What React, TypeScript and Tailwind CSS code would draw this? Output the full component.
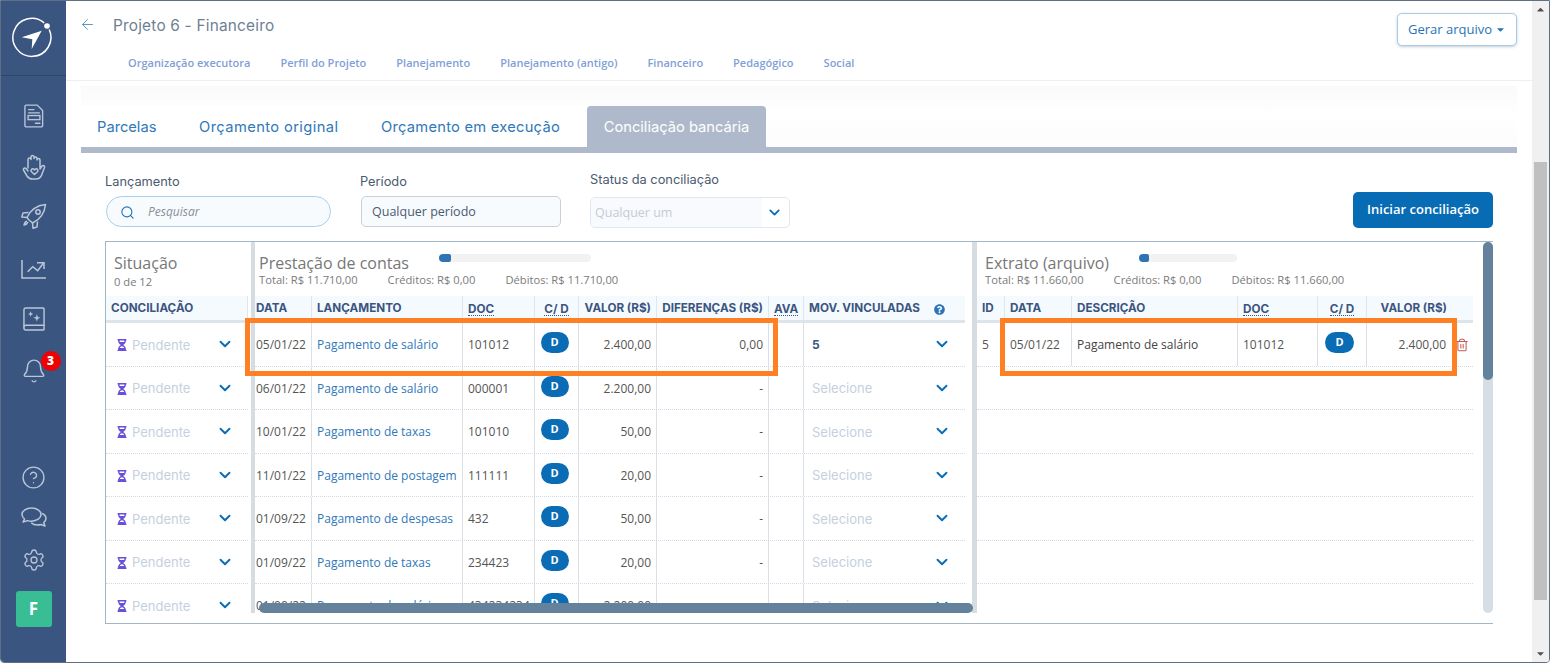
import React from 'react';
import { ArrowLeft, Search, ChevronDown, Bell, CircleHelp, Settings, Trash2 } from 'lucide-react';
import { FaHourglassHalf, FaQuestionCircle, FaCaretDown, FaCaretUp } from 'react-icons/fa';

const OPEN = "font-['Open_Sans',sans-serif]";
const HEAD = "font-['Inter',sans-serif]";

interface Row {
  date: string;
  name: string;
  doc: string;
  value: string;
  diff: string;
  linked: string;
}

const rows: Row[] = [
  { date: '05/01/22', name: 'Pagamento de salário', doc: '101012', value: '2.400,00', diff: '0,00', linked: '5' },
  { date: '06/01/22', name: 'Pagamento de salário', doc: '000001', value: '2.200,00', diff: '-', linked: '' },
  { date: '10/01/22', name: 'Pagamento de taxas', doc: '101010', value: '50,00', diff: '-', linked: '' },
  { date: '11/01/22', name: 'Pagamento de postagem', doc: '111111', value: '20,00', diff: '-', linked: '' },
  { date: '01/09/22', name: 'Pagamento de despesas', doc: '432', value: '50,00', diff: '-', linked: '' },
  { date: '01/09/22', name: 'Pagamento de taxas', doc: '234423', value: '20,00', diff: '-', linked: '' },
  { date: '01/09/22', name: 'Pagamento de salário', doc: '434234234', value: '2.200,00', diff: '-', linked: '' },
];

const navItems = ['Organização executora', 'Perfil do Projeto', 'Planejamento', 'Planejamento (antigo)', 'Financeiro', 'Pedagógico', 'Social'];

const Logo = () => (
  <svg width="42" height="42" viewBox="0 0 42 42" fill="none">
    <path d="M37.2 12.5A19 19 0 1 1 32.2 5.900" stroke="#fff" strokeWidth="1.500" />
    <circle cx="35" cy="9" r="2.800" fill="#fff" />
    <path d="M9.700 20.300 29.700 13.700 19.700 32 20.300 22.300Z" fill="#fff" />
  </svg>
);

const DocIcon = () => (
  <svg width="20" height="24" viewBox="0 0 22 26" fill="none" stroke="#b9c6d8" strokeWidth="1.500">
    <path d="M2.500 1h12l6 6v16.500a1.500 1.500 0 0 1-1.500 1.500H2.500A1.500 1.500 0 0 1 1 23.500V2.500A1.500 1.500 0 0 1 2.500 1Z" />
    <path d="M4.500 6h7M4.500 9.500h13" />
    <rect x="4.500" y="12.500" width="13" height="4.500" />
    <path d="M12 21h6" />
  </svg>
);

const HandIcon = () => (
  <svg width="24" height="26" viewBox="0 0 24 26" fill="none" stroke="#b9c6d8" strokeWidth="1.500" strokeLinecap="round" strokeLinejoin="round">
    <path d="M6 14V5.500a1.500 1.500 0 0 1 3 0V3a1.500 1.500 0 0 1 3 0v1.500a1.500 1.500 0 0 1 3 0V6a1.500 1.500 0 0 1 3 0v9l2-3a1.500 1.500 0 0 1 2.500 1.500L20 20a6.500 6.500 0 0 1-5.500 5h-4A6.500 6.500 0 0 1 5 22l-3.500-6a1.500 1.500 0 0 1 2.500-1.500L6 17" />
    <path d="M12.500 20.500l-3-2.800a1.700 1.700 0 0 1 2.400-2.400l.6.6.6-.6a1.700 1.700 0 0 1 2.400 2.400Z" />
  </svg>
);

const RocketIcon = () => (
  <svg width="26" height="26" viewBox="0 0 26 26" fill="none" stroke="#b9c6d8" strokeWidth="1.500" strokeLinejoin="round">
    <path d="M8 17 6 14.500C9 8 15 2.500 24.500 1.500 23.500 11 18 17 11.500 20Z" />
    <circle cx="17" cy="9" r="2.200" />
    <path d="M7.500 9.500 2 10 .8 14l5.200.5M16.500 18.500 16 24l-4 1.200-.5-5.200M6 18c-1.500.5-2.500 1.500-3 4 2.500-.5 3.500-1.500 4-3" />
  </svg>
);

const ChartIcon = () => (
  <svg width="25" height="19" viewBox="0 0 25 19" fill="none" stroke="#b9c6d8" strokeWidth="1.500">
    <path d="M1 0v18h24" />
    <path d="M6.700 11.700l5-5 5 4 6-8" />
    <path d="M16 2.700h7v6.300" />
  </svg>
);

const BookIcon = () => (
  <svg width="22" height="24" viewBox="0 0 23 25" fill="none" stroke="#b9c6d8" strokeWidth="1.500">
    <path d="M22 1H3a2 2 0 0 0-2 2v19a2 2 0 0 0 2 2h19" />
    <path d="M22 1v18H3a2 2 0 0 0-2 2" />
    <path d="M22 24v-5" />
    <path d="M8 4.500l.8 2 2 .8-2 .8-.8 2-.8-2-2-.8 2-.8ZM14.500 7.500l1 2.800 2.800 1-2.800 1-1 2.800-1-2.800-2.800-1 2.800-1Z" fill="#b9c6d8" stroke="none" />
  </svg>
);

const ChatIcon = () => (
  <svg width="26" height="22" viewBox="0 0 26 22" fill="none" stroke="#b9c6d8" strokeWidth="1.500" strokeLinejoin="round">
    <path d="M10.500 1C5.300 1 1 3.900 1 7.500c0 1.800 1 3.300 2.600 4.500L2 15l4.500-1.400c1.200.4 2.600.6 4 .6 5.200 0 9.500-3 9.500-6.700S15.700 1 10.500 1Z" />
    <path d="M21 6.500c2.400 1 4 2.800 4 5 0 1.600-.9 3-2.300 4.100L24 19l-4.300-1.500c-1 .3-2.100.5-3.200.5-2.600 0-4.900-.9-6.300-2.300" />
  </svg>
);

const Sidebar = () => (
  <aside className="flex h-full w-[65px] shrink-0 flex-col items-center bg-[#3a5580]">
    <div className="flex h-[75px] w-full shrink-0 items-center justify-center border-b border-[#2f4669] pr-[2px]">
      <Logo />
    </div>
    <div className="flex w-full flex-col items-center pt-[27px]">
      <div className="flex h-[26px] items-center"><DocIcon /></div>
      <div className="mt-[25px] flex h-[26px] items-center"><HandIcon /></div>
      <div className="mt-[23px] flex h-[26px] items-center"><RocketIcon /></div>
      <div className="mt-[27px] flex h-[26px] items-center"><ChartIcon /></div>
      <div className="mt-[24px] flex h-[26px] items-center"><BookIcon /></div>
      <div className="relative mt-[26px] flex h-[26px] items-center">
        <Bell size={26} strokeWidth={1.300} className="text-[#b9c6d8]" />
        <span className={`absolute -top-[7px] left-[20px] flex h-[20px] w-[20px] items-center justify-center rounded-full bg-[#f00000] text-[12px] font-extrabold text-white ${OPEN}`}>3</span>
      </div>
    </div>
    <div className="mt-[81px] flex w-full flex-col items-center">
      <CircleHelp size={25} strokeWidth={1.300} className="text-[#b9c6d8]" />
      <div className="mt-[17px]"><ChatIcon /></div>
      <Settings size={24} strokeWidth={1.300} className="mt-[19px] text-[#b9c6d8]" />
      <div className={`mt-[19px] flex h-[36px] w-[36px] items-center justify-center rounded-[3px] bg-[#38bd94] text-[17px] font-bold text-white ${OPEN}`}>F</div>
    </div>
  </aside>
);

const HeaderBar = () => (
  <header className="h-[80px] shrink-0 border-b border-[#eceff2] bg-white">
    <div className="flex items-start">
      <ArrowLeft size={17} strokeWidth={1.200} className="ml-[13px] mt-[15px] text-[#3f86c6]" />
      <h1 className={`ml-[17px] mt-[15px] text-[15.400px] font-normal leading-[20px] tracking-[0.2px] text-[#6f7f93] ${HEAD}`}>Projeto 6 - Financeiro</h1>
      <button className={`ml-auto mr-[15px] mt-[12px] flex h-[33px] w-[120px] items-center justify-center gap-[3px] rounded-[5px] border border-[#a9cbe3] bg-white text-[13px] font-medium text-[#1f74b9] shadow-[0_1px_3px_rgba(60,90,130,0.3)] ${OPEN}`}>
        Gerar arquivo <FaCaretDown size={11} />
      </button>
    </div>
    <nav className={`ml-[62px] mt-[9px] flex gap-[30px] text-[11px] font-semibold leading-[15px] text-[#7f9fd6] ${OPEN}`}>
      {navItems.map((item) => <span key={item}>{item}</span>)}
    </nav>
  </header>
);

const Tabs = () => (
  <div className={`mt-[5px] flex h-[61px] items-end bg-gradient-to-b from-[#fafafa] via-white to-[#fcfcfc] text-[14.700px] font-normal ${HEAD}`}>
    <span className="flex h-[41px] w-[103px] items-center bg-white pl-[16px] pt-[2px] text-[#2f78b9]">Parcelas</span>
    <span className="flex h-[41px] w-[181px] items-center bg-white pl-[15px] pt-[2px] tracking-[0.4px] text-[#2f78b9]">Orçamento original</span>
    <span className="flex h-[41px] w-[222px] items-center bg-white pl-[16px] pt-[2px] tracking-[0.25px] text-[#2f78b9]">Orçamento em execução</span>
    <span className="flex h-[41px] w-[179px] items-center justify-center rounded-t-[4px] bg-[#aebacb] pt-[2px] text-white">Conciliação bancária</span>
  </div>
);

const Filters = () => (
  <div className={`flex h-[88px] items-start px-[24px] text-[12.800px] text-[#4a5a70] ${HEAD}`}>
    <div className="w-[255px] pt-[21px]">
      <div className="h-[16px] leading-[16px]">Lançamento</div>
      <div className={`ml-[1px] mt-[6px] flex h-[31px] w-[225px] items-center rounded-full border border-[#a8d0e8] bg-[#f8fbfe] pl-[13px] pt-[1px] text-[12px] italic text-[#8a8f96] ${OPEN}`}>
        <Search size={15} strokeWidth={1.800} className="text-[#1f74b9]" />
        <span className="ml-[13px]">Pesquisar</span>
      </div>
    </div>
    <div className="w-[230px] pt-[21px]">
      <div className="h-[16px] leading-[16px]">Período</div>
      <div className={`ml-[1px] mt-[6px] flex h-[31px] w-[200px] items-center rounded-[5px] border border-[#cccfd4] bg-[#f8fbfe] pl-[10px] pt-[1px] text-[12.500px] text-[#4a5a70] ${OPEN}`}>Qualquer período</div>
    </div>
    <div className="w-[200px] pt-[19px]">
      <div className="h-[16px] leading-[16px]">Status da conciliação</div>
      <div className={`mt-[9px] flex h-[31px] w-[200px] items-center overflow-hidden rounded-[5px] border border-[#dfe7f0] bg-white text-[12.500px] text-[#c5ccd6] ${OPEN}`}>
        <span className="flex h-full w-[171px] items-center bg-[#f8fafd] pl-[4px] pt-[2px]">Qualquer um</span>
        <ChevronDown size={17} strokeWidth={2.500} className="ml-[4px] text-[#0a6cb5]" />
      </div>
    </div>
    <button className={`ml-auto mt-[39px] h-[36px] w-[140px] rounded-[5px] bg-[#086cb5] text-[13px] font-semibold text-white ${OPEN}`}>Iniciar conciliação</button>
  </div>
);

const Th = ({ w, children, right, center, dotted, last }: { w: string; children?: React.ReactNode; right?: boolean; center?: boolean; dotted?: boolean; last?: boolean }) => (
  <div className={`flex h-full shrink-0 items-center px-[5px] pt-[2px] ${w} ${right ? 'justify-end' : ''} ${center ? 'justify-center' : ''} ${last ? '' : 'border-r border-[#dfe6ec]'}`}>
    {dotted ? <span className="border-b border-dotted border-[#3b5580] leading-[12px]">{children}</span> : children}
  </div>
);

const HeadRow = ({ children, w }: { children: React.ReactNode; w: string }) => (
  <div className={`flex h-[27px] shrink-0 border-b-[3px] border-[#dde5ea] bg-[#f5fafe] text-[11.700px] font-bold text-[#3b5580] ${HEAD} ${w}`}>{children}</div>
);

const Td = ({ w, children, right, center, last }: { w: string; children?: React.ReactNode; right?: boolean; center?: boolean; last?: boolean }) => (
  <div className={`flex h-full shrink-0 items-center px-[5px] pt-[2px] ${w} ${right ? 'justify-end' : ''} ${center ? 'justify-center' : ''} ${last ? '' : 'border-r border-[#d8e0e6]'}`}>{children}</div>
);

const Badge = ({ wide }: { wide?: boolean }) => (
  <span className={`mb-auto mt-[7px] flex h-[21px] items-center justify-center rounded-full bg-[#0a6cb5] text-[11px] font-bold text-white ${wide ? 'w-[29px]' : 'w-[28px]'} ${OPEN}`}>D</span>
);

const Summary = ({ total, credit, debit }: { total: string; credit: string; debit: string }) => (
  <div className={`-mt-[1px] flex gap-[30px] text-[11.200px] leading-[14px] text-[#7b7b7b] ${OPEN}`}>
    <span>Total: R$ {total}</span>
    <span>Créditos: R$ {credit}</span>
    <span>Débitos: R$ {debit}</span>
  </div>
);

const Progress = ({ w, fill }: { w: string; fill: string }) => (
  <div className={`mt-[2px] h-[8px] overflow-hidden rounded-full bg-[#f2f2f2] ${w}`}>
    <div className={`h-full rounded-[2px] bg-[#2e74b5] ${fill}`} />
  </div>
);

const Situacao = () => (
  <div className="flex w-[145px] shrink-0 flex-col">
    <div className="h-[54px] shrink-0 pl-[8px] pt-[10px]">
      <div className={`text-[16px] leading-[22px] text-[#777] ${OPEN}`}>Situação</div>
      <div className={`mt-[1px] text-[11.200px] leading-[14px] text-[#7b7b7b] ${OPEN}`}>0 de 12</div>
    </div>
    <HeadRow w="w-[142px]"><Th w="w-[142px]">CONCILIAÇÃO</Th></HeadRow>
    {rows.map((r, i) => (
      <div key={i} className="flex h-[43.500px] w-[142px] shrink-0 items-center border-b border-dotted border-[#d3dbe6] pl-[10px] pt-[2px]">
        <FaHourglassHalf size={12} className="text-[#6a4fd8]" />
        <span className={`ml-[4px] text-[13px] text-[#c5d0df] ${HEAD}`}>Pendente</span>
        <ChevronDown size={18} strokeWidth={2.500} className="ml-auto mr-[14px] -mt-[2px] text-[#0a6cb5]" />
      </div>
    ))}
  </div>
);

const Prestacao = () => (
  <div className="flex w-[717px] shrink-0 flex-col">
    <div className="h-[54px] shrink-0 pl-[4px] pt-[10px]">
      <div className="flex gap-[30px]">
        <div className={`text-[16px] leading-[22px] text-[#777] ${OPEN}`}>Prestação de contas</div>
        <Progress w="w-[152px]" fill="w-[12px]" />
      </div>
      <Summary total="11.710,00" credit="0,00" debit="11.710,00" />
    </div>
    <HeadRow w="w-[710px]">
      <Th w="w-[57px] !px-[1px]">DATA</Th>
      <Th w="w-[151px]">LANÇAMENTO</Th>
      <Th w="w-[72px]" dotted>DOC</Th>
      <Th w="w-[44px]" dotted center>C/ D</Th>
      <Th w="w-[78px]" right>VALOR (R$)</Th>
      <Th w="w-[112px]" right>DIFERENÇAS (R$)</Th>
      <Th w="w-[35px]" dotted>AVA</Th>
      <Th w="w-[161px]" last>
        <span>MOV. VINCULADAS</span>
        <FaQuestionCircle size={11} className="ml-auto mr-[15px] text-[#2e74b5]" />
      </Th>
    </HeadRow>
    {rows.map((r, i) => (
      <div key={i} className={`flex h-[43.500px] w-[710px] shrink-0 items-center border-b border-dotted border-[#d3dbe6] text-[12px] text-[#555] ${OPEN}`}>
        <Td w="w-[57px] !px-[1px]">{r.date}</Td>
        <Td w="w-[151px] text-[#2f78b9]">{r.name}</Td>
        <Td w="w-[72px]">{r.doc}</Td>
        <Td w="w-[44px] !pl-[5px] !pr-[9px]" center><Badge /></Td>
        <Td w="w-[78px]" right>{r.value}</Td>
        <Td w="w-[112px]" right>{r.diff}</Td>
        <Td w="w-[35px]" />
        <Td w="w-[161px] !pl-[8px]" last>
          {r.linked
            ? <span className={`text-[12px] font-bold text-[#3b5580] ${HEAD}`}>{r.linked}</span>
            : <span className={`text-[13px] text-[#c5d0df] ${HEAD}`}>Selecione</span>}
          <ChevronDown size={18} strokeWidth={2.500} className="ml-auto mr-[9px] -mt-[2px] text-[#0a6cb5]" />
        </Td>
      </div>
    ))}
  </div>
);

const Extrato = () => (
  <div className="flex w-[496px] shrink-0 flex-col">
    <div className="h-[54px] shrink-0 pl-[8px] pt-[10px]">
      <div className="flex gap-[30px]">
        <div className={`text-[16px] leading-[22px] text-[#777] ${OPEN}`}>Extrato (arquivo)</div>
        <Progress w="w-[98px]" fill="w-[10px]" />
      </div>
      <Summary total="11.660,00" credit="0,00" debit="11.660,00" />
    </div>
    <HeadRow w="w-[496px]">
      <Th w="w-[28px]">ID</Th>
      <Th w="w-[67px]">DATA</Th>
      <Th w="w-[166px]">DESCRIÇÃO</Th>
      <Th w="w-[80px]" dotted>DOC</Th>
      <Th w="w-[49px]" dotted center>C/ D</Th>
      <Th w="w-[106px] !pr-[26px]" right last>VALOR (R$)</Th>
    </HeadRow>
    <div className={`flex h-[43.500px] w-[496px] shrink-0 items-center border-b border-dotted border-[#d3dbe6] text-[12px] text-[#555] ${OPEN}`}>
      <Td w="w-[28px]">5</Td>
      <Td w="w-[67px]">05/01/22</Td>
      <Td w="w-[166px] text-[#444]">Pagamento de salário</Td>
      <Td w="w-[80px]">101012</Td>
      <Td w="w-[49px] !pl-[4px] !pr-[9px]" center><Badge wide /></Td>
      <Td w="w-[84px]" right last>2.400,00</Td>
      <Trash2 size={14} strokeWidth={1.800} className="ml-[4px] mt-[1px] text-[#c25a5a]" />
    </div>
    {[1, 2, 3, 4, 5, 6].map((i) => (
      <div key={i} className="h-[43.500px] w-[496px] shrink-0 border-b border-dotted border-[#d3dbe6]" />
    ))}
  </div>
);

const Reconciliation = () => (
  <div className="relative ml-[24px] h-[383px] w-[1388px] border-b border-l border-t border-[#a3b6c6]">
    <div className="flex h-[371px] overflow-hidden">
      <Situacao />
      <div className="w-[4px] shrink-0 bg-[#d5dde3]" />
      <Prestacao />
      <div className="w-[5px] shrink-0 bg-[#d5dde3]" />
      <Extrato />
    </div>
    {/* overlay scrollbars */}
    <div className="absolute left-[153px] top-[361px] h-[10px] w-[714px] rounded-full bg-[#64829b]" />
    <div className="absolute right-0 top-[0px] h-[371px] w-[10px] rounded-full bg-[#d5dde5]">
      <div className="h-[138px] rounded-full bg-[#64829b]" />
    </div>
    {/* highlight rectangles */}
    <div className="absolute left-[139px] top-[76px] h-[58px] w-[533px] border-[5px] border-[#ff8024]" />
    <div className="absolute left-[894px] top-[76px] h-[58px] w-[457px] border-[5px] border-[#ff8024]" />
  </div>
);

export default function App() {
  return (
    <div className="flex h-[663px] w-[1550px] overflow-hidden rounded-b-[4px] border border-[#5f7085] bg-white">
      <Sidebar />
      <main className="flex h-full min-w-0 flex-1 flex-col">
        <HeaderBar />
        <div className="pl-[15px] pr-[15px]">
          <Tabs />
          <div className="h-[6px] bg-[#aebacb]" />
          <Filters />
          <Reconciliation />
        </div>
      </main>
      <div className="flex h-full w-[17px] shrink-0 flex-col items-center bg-[#f0f0f0]">
        <FaCaretUp size={11} className="mt-[3px] text-[#505050]" />
        <div className="mt-[147px] h-[438px] w-[13px] bg-[#c0c0c0]" />
        <FaCaretDown size={11} className="mt-auto mb-[3px] text-[#505050]" />
      </div>
    </div>
  );
}
